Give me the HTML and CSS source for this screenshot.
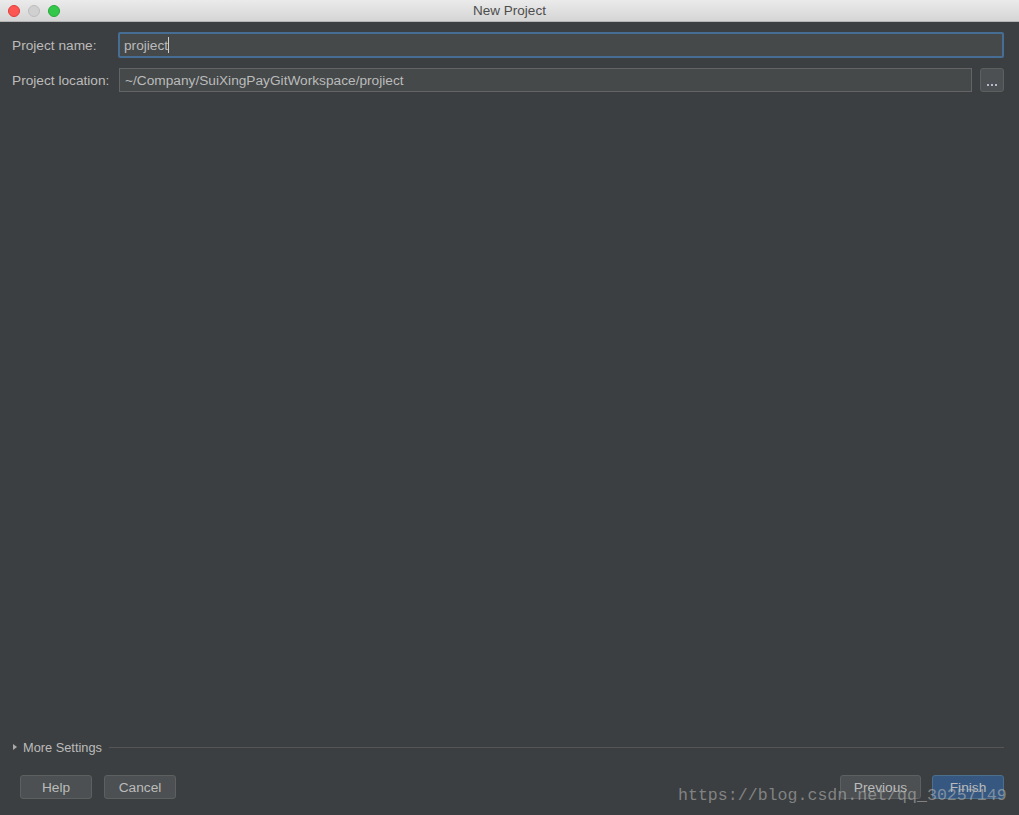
FILE: index.html
```html
<!DOCTYPE html>
<html lang="en">
<head>
    <meta charset="UTF-8">
    <title>New Project</title>
    <link rel="stylesheet" href="styles.css">
</head>
<body>

    <div class="window">
        <div class="titlebar">
            <div class="lights">
                <span class="light red"></span>
                <span class="light gray"></span>
                <span class="light green"></span>
            </div>
            <div class="title">New Project</div>
        </div>

        <div class="content">
            <div class="form">
                <label for="name">Project name:</label>
                <div class="field focused">
                    <span>projiect</span><span class="caret"></span>
                </div>

                <label for="location">Project location:</label>
                <div class="field">~/Company/SuiXingPayGitWorkspace/projiect</div>
                <button class="browse"><span></span><span></span><span></span></button>
            </div>

            <div class="more">
                <span class="arrow"></span>
                <span class="more-label">More Settings</span>
                <span class="rule"></span>
            </div>

            <div class="actions">
                <div class="left">
                    <button class="btn">Help</button>
                    <button class="btn">Cancel</button>
                </div>
                <div class="right">
                    <button class="btn wide">Previous</button>
                    <button class="btn primary">Finish</button>
                </div>
            </div>
        </div>

        <div class="watermark">https://blog.csdn.net/qq_30257149</div>
    </div>

</body>
</html>
```

FILE: styles.css
```css
/* Base */
body {
    margin: 0;
    padding: 0;
    background: #3c3f41;
    font-family: 'Liberation Sans', Arial, sans-serif;
    font-size: 13.7px;
    color: #bbbbbb;
}

.window {
    position: relative;
    width: 1019px;
    height: 815px;
    display: flex;
    flex-direction: column;
    overflow: hidden;
}

/* Title bar */
.titlebar {
    height: 22px;
    flex: none;
    background: linear-gradient(#ebebeb, #d5d5d5);
    border-bottom: 1px solid #b4b4b4;
    box-sizing: border-box;
    display: flex;
    align-items: center;
    position: relative;
}

.lights {
    display: flex;
    gap: 8px;
    padding-left: 8px;
}

.light {
    width: 12px;
    height: 12px;
    border-radius: 50%;
    box-sizing: border-box;
}

.light.red { background: #fc5753; border: 1px solid #df3e3a; }
.light.gray { background: #d0d0d0; border: 1px solid #bdbdbd; }
.light.green { background: #34c84a; border: 1px solid #25a93a; }

.title {
    position: absolute;
    left: 0;
    right: 0;
    text-align: center;
    color: #4d4d4d;
    font-size: 13.5px;
}

/* Content */
.content {
    flex: 1;
    display: flex;
    flex-direction: column;
    padding: 10px 15px 16px 12px;
}

.form {
    display: grid;
    grid-template-columns: 106px 1fr 24px;
    column-gap: 8px;
    row-gap: 10px;
    align-items: center;
}

.form label {
    color: #bbbbbb;
}

.field {
    height: 24px;
    box-sizing: border-box;
    background: #45494a;
    border: 1px solid #646464;
    padding: 0 5px;
    display: flex;
    align-items: center;
    margin-left: -7px;
    color: #bbbbbb;
}

.field.focused {
    grid-column: 2 / 4;
    height: 26px;
    border: 2px solid #466d94;
    margin-left: -8px;
    padding-left: 4px;
    border-radius: 2px;
}

.caret {
    width: 1px;
    height: 16px;
    background: #d0d0d0;
}

.browse {
    width: 24px;
    height: 24px;
    padding: 0 0 5px;
    background: #4c5052;
    border: 1px solid #5e6060;
    border-radius: 3px;
    display: flex;
    justify-content: center;
    align-items: flex-end;
    gap: 2px;
}

.browse span {
    width: 2px;
    height: 2px;
    background: #b8b8c8;
}

/* More settings */
.more {
    margin-top: auto;
    display: flex;
    align-items: center;
    height: 14px;
}

.arrow {
    width: 0;
    height: 0;
    border-top: 3px solid transparent;
    border-bottom: 3px solid transparent;
    border-left: 4px solid #aaaaaa;
    margin-left: 1px;
    margin-right: 6px;
}

.more-label {
    font-size: 12.8px;
}

.rule {
    flex: 1;
    height: 1px;
    background: #555555;
    margin-left: 7px;
}

/* Bottom buttons */
.actions {
    margin-top: 21px;
    display: flex;
    justify-content: space-between;
    padding-left: 8px;
}

.left, .right {
    display: flex;
    gap: 12px;
}

.right {
    gap: 11px;
}

.btn {
    width: 72px;
    height: 24px;
    background: #4c5052;
    border: 1px solid #5e6060;
    border-radius: 3px;
    color: #bbbbbb;
    font-family: 'Liberation Sans', Arial, sans-serif;
    font-size: 13.7px;
}

.btn.wide {
    width: 81px;
}

.btn.primary {
    background: #365880;
    border-color: #4c708c;
    color: #bbbbbb;
}

/* Watermark overlay */
.watermark {
    position: absolute;
    left: 678px;
    top: 786px;
    font-family: 'Liberation Mono', 'DejaVu Sans Mono', monospace;
    font-size: 16.6px;
    color: rgba(190, 190, 190, 0.55);
    pointer-events: none;
}
```
